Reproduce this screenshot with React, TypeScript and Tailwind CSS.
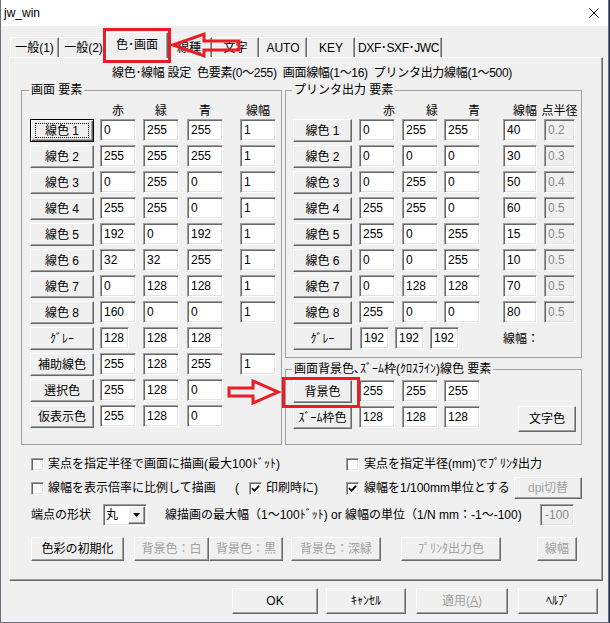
import React from 'react';

// classic Win32 3D edges
const raised =
  'border border-t-white border-l-white border-r-[#696969] border-b-[#696969] bg-[#f0f0f0] shadow-[inset_-1px_-1px_#a0a0a0]';
const sunken =
  'border border-t-[#a0a0a0] border-l-[#a0a0a0] border-r-white border-b-white shadow-[inset_1px_1px_#696969,inset_-1px_-1px_#e3e3e3]';

type BtnProps = {
  children: React.ReactNode;
  className?: string;
  disabled?: boolean;
  focused?: boolean;
};

function Btn({ children, className = '', disabled = false, focused = false }: BtnProps) {
  if (focused) {
    return (
      <div
        className={`relative flex shrink-0 items-center justify-center border border-black bg-[#f0f0f0] shadow-[inset_1px_1px_white,inset_-1px_-1px_#696969,inset_-2px_-2px_#a0a0a0] ${className}`}
      >
        <span className="pointer-events-none absolute inset-x-[4px] inset-y-[3px] border border-dotted border-black" />
        {children}
      </div>
    );
  }
  return (
    <div
      className={`flex shrink-0 items-center justify-center whitespace-nowrap ${raised} ${
        disabled ? 'text-[#a0a0a0]' : 'text-black'
      } ${className}`}
    >
      {children}
    </div>
  );
}

function Field({ value, className = '', disabled = false }: { value: string; className?: string; disabled?: boolean }) {
  return (
    <div
      className={`flex h-[22px] shrink-0 items-center pl-[3px] ${sunken} ${
        disabled ? 'bg-[#f0f0f0] text-[#8a8a8a]' : 'bg-white'
      } ${className}`}
    >
      {value}
    </div>
  );
}

function Check({ checked = false }: { checked?: boolean }) {
  return (
    <span className={`flex h-[13px] w-[13px] shrink-0 items-center justify-center bg-white ${sunken}`}>
      {checked && (
        <svg width="9" height="9" viewBox="0 0 9 9">
          <path d="M1 4.2 L3.4 6.8 L8 1.8" fill="none" stroke="#000" strokeWidth="1.8" />
        </svg>
      )}
    </span>
  );
}

type Row = { label: string; values: (string | null)[]; focused?: boolean; first?: string };

const leftCols = ['w-[36px] ml-[6px]', 'w-[36px] ml-[7px]', 'w-[36px] ml-[8px]', 'w-[36px] ml-[17px]'];
const rightCols = ['w-[36px] ml-[7px]', 'w-[36px] ml-[7px]', 'w-[36px] ml-[6px]', 'w-[34px] ml-[23px]', 'w-[31px] ml-[7px]'];

const screenRows: Row[] = [
  { label: '線色 1', values: ['0', '255', '255', '1'], focused: true },
  { label: '線色 2', values: ['255', '255', '255', '1'] },
  { label: '線色 3', values: ['0', '255', '0', '1'] },
  { label: '線色 4', values: ['255', '255', '0', '1'] },
  { label: '線色 5', values: ['192', '0', '192', '1'] },
  { label: '線色 6', values: ['32', '32', '255', '1'] },
  { label: '線色 7', values: ['0', '128', '128', '1'] },
  { label: '線色 8', values: ['160', '0', '0', '1'] },
  { label: 'ｸﾞﾚｰ', values: ['128', '128', '128', null], first: 'w-[29px] ml-[6px] mr-[7px]' },
  { label: '補助線色', values: ['255', '128', '255', '1'] },
  { label: '選択色', values: ['255', '128', '0', null] },
  { label: '仮表示色', values: ['255', '128', '0', null] },
];

const printerRows: string[][] = [
  ['0', '255', '255', '40', '0.2'],
  ['0', '0', '0', '30', '0.3'],
  ['0', '255', '0', '50', '0.4'],
  ['255', '255', '0', '60', '0.5'],
  ['255', '0', '255', '15', '0.5'],
  ['0', '0', '255', '10', '0.5'],
  ['0', '128', '128', '70', '0.5'],
  ['255', '0', '0', '80', '0.5'],
];

const tabs = [
  { label: '一般(1)', w: 'w-[49px]' },
  { label: '一般(2)', w: 'w-[49px]' },
  { label: '色･画面', w: 'w-[62px]', active: true },
  { label: '線種', w: 'w-[46px]' },
  { label: '文字', w: 'w-[47px]' },
  { label: 'AUTO', w: 'w-[48px]' },
  { label: 'KEY', w: 'w-[48px]' },
  { label: 'DXF･SXF･JWC', w: 'w-[87px] tracking-[-0.4px]' },
];

export default function App() {
  return (
    <div className="relative h-[623px] w-[610px] overflow-hidden bg-[#1d2f4c] font-['Liberation_Sans','Noto_Sans_CJK_JP',sans-serif] text-[12px] leading-[14px] text-black">
      <div className="flex h-[623px] w-[609px] flex-col border-x border-b border-[#6b717a] bg-[#f0f0f0]">
        {/* title bar */}
        <div className="flex h-[26px] shrink-0 items-center justify-between bg-white pl-[3px] pr-[9px]">
          <span>jw_win</span>
          <svg width="10" height="10" viewBox="0 0 10 10">
            <path d="M0.5 0.5L9.5 9.5M9.5 0.5L0.5 9.5" stroke="#000" strokeWidth="1" />
          </svg>
        </div>

        {/* tabs */}
        <div className="flex h-[31px] shrink-0 items-end pl-[9px]">
          {tabs.map((t) =>
            t.active ? (
              <div
                key={t.label}
                className={`relative z-10 -mx-[2px] -mb-px flex h-[26px] items-center justify-center border-l border-t border-r border-l-white border-t-white border-r-[#696969] bg-[#f0f0f0] shadow-[inset_-1px_0_#a0a0a0] pb-[2px] ${t.w}`}
              >
                {t.label}
              </div>
            ) : (
              <div
                key={t.label}
                className={`flex h-[20px] items-center justify-center border-l border-t border-r border-l-white border-t-white border-r-[#696969] shadow-[inset_-1px_0_#a0a0a0] whitespace-nowrap ${t.w}`}
              >
                {t.label}
              </div>
            )
          )}
        </div>

        {/* tab page */}
        <div className="ml-[8px] h-[524px] w-[594px] shrink-0 border border-t-white border-l-white border-r-[#696969] border-b-[#696969] pt-[8px] shadow-[inset_-1px_-1px_#a0a0a0]">
          <div className="whitespace-pre pl-[102px] tracking-[-0.3px]">線色･線幅 設定  色要素(0〜255)  画面線幅(1〜16)  プリンタ出力線幅(1〜500)</div>

          <div className="mt-[3px] flex pl-[11px]">
            {/* screen group */}
            <fieldset className="h-[362px] w-[261px] shrink-0 border border-[#a0a0a0]">
              <legend className="ml-[7px] px-[2px] leading-[14px]">画面 要素</legend>
              <div className="pl-[8px] pt-[7px]">
                <div className="flex h-[14px]">
                  <div className="w-[64px] shrink-0" />
                  {['赤', '緑', '青', '線幅'].map((h, i) => (
                    <div key={h} className={`shrink-0 text-center ${leftCols[i]}`}>
                      {h}
                    </div>
                  ))}
                </div>
                <div className="mt-[1px] flex flex-col gap-[3px]">
                  {screenRows.map((r) => (
                    <div key={r.label} className="flex h-[23px] items-start">
                      <Btn focused={r.focused} className="h-[23px] w-[64px]">
                        {r.label}
                      </Btn>
                      {r.values.map((v, i) => {
                        const cls = i === 0 && r.first ? r.first : leftCols[i];
                        return v === null ? (
                          <div key={i} className={`shrink-0 ${cls}`} />
                        ) : (
                          <Field key={i} value={v} className={cls} />
                        );
                      })}
                    </div>
                  ))}
                </div>
              </div>
            </fieldset>

            <div className="ml-[3px] flex w-[297px] shrink-0 flex-col gap-[4px]">
              {/* printer group */}
              <fieldset className="h-[275px] border border-[#a0a0a0]">
                <legend className="ml-[6px] px-[2px] leading-[14px]">プリンタ出力 要素</legend>
                <div className="pl-[7px] pt-[7px]">
                  <div className="flex h-[14px]">
                    <div className="w-[59px] shrink-0" />
                    {['赤', '緑', '青', '線幅'].map((h, i) => (
                      <div key={h} className={`shrink-0 text-right ${rightCols[i]}`}>
                        {h}
                      </div>
                    ))}
                    <div className={`flex shrink-0 justify-center whitespace-nowrap ${rightCols[4]}`}>点半径</div>
                  </div>
                  <div className="mt-[1px] flex flex-col gap-[3px]">
                    {printerRows.map((r, n) => (
                      <div key={n} className="flex h-[23px] items-start">
                        <Btn className="h-[23px] w-[59px]">線色 {n + 1}</Btn>
                        {r.map((v, i) => (
                          <Field key={i} value={v} className={rightCols[i]} disabled={i === 4} />
                        ))}
                      </div>
                    ))}
                    <div className="flex h-[23px] items-start">
                      <Btn className="h-[23px] w-[59px]">ｸﾞﾚｰ</Btn>
                      <Field value="192" className="ml-[8px] w-[29px]" />
                      <Field value="192" className="ml-[6px] w-[29px]" />
                      <Field value="192" className="ml-[6px] w-[29px]" />
                      <span className="ml-[44px] self-center whitespace-nowrap">線幅：</span>
                    </div>
                  </div>
                </div>
              </fieldset>

              {/* background group */}
              <fieldset className="h-[83px] border border-[#a0a0a0]">
                <legend className="ml-[6px] px-[2px] leading-[14px]">画面背景色､ｽﾞｰﾑ枠(ｸﾛｽﾗｲﾝ)線色 要素</legend>
                <div className="flex flex-col gap-[3px] pl-[7px] pt-[4px]">
                  <div className="flex h-[23px] items-start">
                    <Btn className="h-[23px] w-[59px]">背景色</Btn>
                    <Field value="255" className={rightCols[0]} />
                    <Field value="255" className={rightCols[1]} />
                    <Field value="255" className={rightCols[2]} />
                  </div>
                  <div className="flex items-start">
                    <Btn className="h-[23px] w-[59px]">ｽﾞｰﾑ枠色</Btn>
                    <Field value="128" className={rightCols[0]} />
                    <Field value="128" className={rightCols[1]} />
                    <Field value="128" className={rightCols[2]} />
                    <Btn className="ml-[38px] h-[26px] w-[58px]">文字色</Btn>
                  </div>
                </div>
              </fieldset>
            </div>
          </div>

          {/* options */}
          <div className="mt-[11px] flex h-[16px] items-center pl-[21px]">
            <div className="flex w-[315px] shrink-0 items-center">
              <Check />
              <span className="ml-[4px] whitespace-nowrap">実点を指定半径で画面に描画(最大100ﾄﾞｯﾄ)</span>
            </div>
            <Check />
            <span className="ml-[5px] whitespace-nowrap">実点を指定半径(mm)でﾌﾟﾘﾝﾀ出力</span>
          </div>

          <div className="mt-[5px] flex h-[22px] items-center pl-[21px]">
            <div className="flex w-[204px] shrink-0 items-center">
              <Check />
              <span className="ml-[4px] whitespace-nowrap">線幅を表示倍率に比例して描画</span>
            </div>
            <div className="flex w-[111px] shrink-0 items-center">
              <span>(</span>
              <span className="ml-[10px]">
                <Check checked />
              </span>
              <span className="ml-[4px] whitespace-nowrap">印刷時に)</span>
            </div>
            <div className="flex w-[168px] shrink-0 items-center">
              <Check checked />
              <span className="ml-[5px] whitespace-nowrap">線幅を1/100mm単位とする</span>
            </div>
            <Btn disabled className="h-[22px] w-[68px]">
              dpi切替
            </Btn>
          </div>

          <div className="mt-[5px] flex h-[22px] items-center pl-[21px]">
            <span className="w-[72px] shrink-0 whitespace-nowrap">端点の形状</span>
            <div className={`flex h-[22px] w-[44px] shrink-0 items-center bg-white ${sunken}`}>
              <span className="ml-[2px] flex-1">丸</span>
              <span className={`mr-[1px] flex h-[18px] w-[17px] items-center justify-center ${raised}`}>
                <svg width="7" height="4" viewBox="0 0 7 4">
                  <path d="M0 0H7L3.5 4Z" fill="#000" />
                </svg>
              </span>
            </div>
            <span className="ml-[18px] w-[375px] shrink-0 whitespace-nowrap">
              線描画の最大幅（1〜100ﾄﾞｯﾄ) or 線幅の単位（1/N mm：-1〜-100)
            </span>
            <div className={`flex h-[22px] w-[34px] shrink-0 items-center justify-center bg-[#f0f0f0] text-[#8a8a8a] ${sunken}`}>
              -100
            </div>
          </div>

          <div className="mt-[11px] flex h-[24px] items-start pl-[21px]">
            <Btn className="h-[24px] w-[93px]">色彩の初期化</Btn>
            <Btn disabled className="ml-[10px] h-[24px] w-[75px]">
              背景色：白
            </Btn>
            <Btn disabled className="h-[24px] w-[74px]">
              背景色：黒
            </Btn>
            <Btn disabled className="ml-[8px] h-[24px] w-[90px]">
              背景色：深緑
            </Btn>
            <Btn disabled className="ml-[20px] h-[24px] w-[100px]">
              ﾌﾟﾘﾝﾀ出力色
            </Btn>
            <Btn disabled className="ml-[36px] h-[24px] w-[40px]">
              線幅
            </Btn>
          </div>
        </div>

        {/* dialog buttons */}
        <div className="mt-[7px] flex h-[26px] pl-[231px]">
          <Btn className="h-[26px] w-[86px]">OK</Btn>
          <Btn className="ml-[8px] h-[26px] w-[80px]">ｷｬﾝｾﾙ</Btn>
          <Btn disabled className="ml-[10px] h-[26px] w-[92px]">
            適用(<span className="underline">A</span>)
          </Btn>
          <Btn className="ml-[10px] h-[26px] w-[80px]">ﾍﾙﾌﾟ</Btn>
        </div>
      </div>

      {/* red annotation marks drawn over the screenshot */}
      <svg className="pointer-events-none absolute left-0 top-0" width="610" height="623" viewBox="0 0 610 623">
        <g fill="none" stroke="#ec1c24" strokeWidth="3">
          <rect x="104.5" y="29.5" width="65" height="32" />
          <polygon points="173,45 204,34 204,41 239,41 239,50 204,50 204,56" strokeLinejoin="miter" />
          <rect x="283.5" y="378.5" width="75" height="28" />
          <polygon points="229,388 253,388 253,381 278,392 253,403 253,396 229,396" strokeLinejoin="miter" />
        </g>
      </svg>
    </div>
  );
}
